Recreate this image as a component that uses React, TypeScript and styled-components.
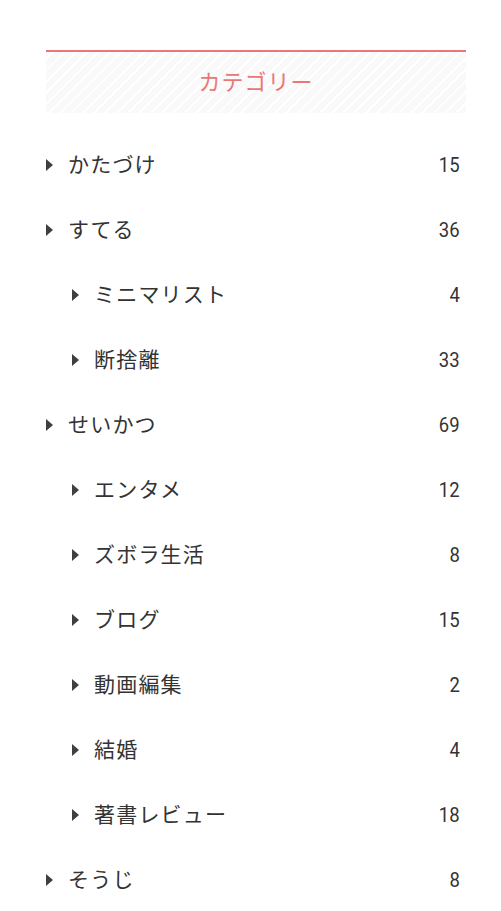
import React from "react";
import styled, { createGlobalStyle } from "styled-components";

const GlobalStyle = createGlobalStyle`
  html, body {
    margin: 0;
    padding: 0;
    background: #ffffff;
  }
  body {
    font-family: "Noto Sans CJK JP", "Noto Sans", sans-serif;
    color: #333333;
  }
`;

type Category = {
  name: string;
  count: number;
  children?: Category[];
};

const categories: Category[] = [
  { name: "かたづけ", count: 15 },
  {
    name: "すてる",
    count: 36,
    children: [
      { name: "ミニマリスト", count: 4 },
      { name: "断捨離", count: 33 },
    ],
  },
  {
    name: "せいかつ",
    count: 69,
    children: [
      { name: "エンタメ", count: 12 },
      { name: "ズボラ生活", count: 8 },
      { name: "ブログ", count: 15 },
      { name: "動画編集", count: 2 },
      { name: "結婚", count: 4 },
      { name: "著書レビュー", count: 18 },
    ],
  },
  { name: "そうじ", count: 8 },
];

const Widget = styled.aside`
  width: 420px;
  padding: 50px 0 0 46px;
`;

const Title = styled.h3`
  margin: 0;
  box-sizing: border-box;
  height: 63px;
  padding-bottom: 6px;
  border-top: 2px solid #ea7777;
  border-radius: 0 0 3px 3px;
  display: flex;
  align-items: center;
  justify-content: center;
  font-size: 22px;
  font-weight: 400;
  letter-spacing: 1px;
  color: #ea7777;
  background-color: #f9f9f9;
  background-image: repeating-linear-gradient(
    -45deg,
    #f9f9f9 0,
    #f9f9f9 6px,
    #ffffff 6px,
    #ffffff 8px
  );
`;

const List = styled.ul<{ $nested?: boolean }>`
  list-style: none;
  margin: ${({ $nested }) => ($nested ? "0" : "19px 0 0")};
  padding: 0;
`;

const Row = styled.a<{ $depth: number }>`
  display: flex;
  align-items: center;
  height: 65px;
  padding: 0 6px 0 ${({ $depth }) => ($depth > 0 ? 26 : 0)}px;
  color: #333333;
  text-decoration: none;
  font-size: 21px;
  letter-spacing: 1.2px;
`;

const Caret = styled.span`
  width: 0;
  height: 0;
  border-top: 6.5px solid transparent;
  border-bottom: 6.5px solid transparent;
  border-left: 7.5px solid #3f3f3f;
  margin-right: 15px;
  flex-shrink: 0;
`;

const Name = styled.span`
  flex: 1;
  padding-bottom: 4px;
`;

const Count = styled.span`
  font-family: "Roboto", "Liberation Sans", sans-serif;
  font-size: 21px;
  letter-spacing: 0;
  display: inline-block;
  transform: scaleX(0.88);
  transform-origin: right center;
`;

const Item = ({ item, depth }: { item: Category; depth: number }) => (
  <li>
    <Row href="#" $depth={depth}>
      <Caret />
      <Name>{item.name}</Name>
      <Count>{item.count}</Count>
    </Row>
    {item.children && (
      <List $nested>
        {item.children.map((c) => (
          <Item key={c.name} item={c} depth={depth + 1} />
        ))}
      </List>
    )}
  </li>
);

export default function App() {
  return (
    <>
      <GlobalStyle />
      <Widget>
        <Title>カテゴリー</Title>
        <List>
          {categories.map((c) => (
            <Item key={c.name} item={c} depth={0} />
          ))}
        </List>
      </Widget>
    </>
  );
}
